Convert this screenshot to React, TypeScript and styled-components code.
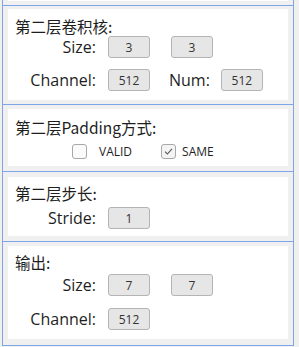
import styled, { createGlobalStyle } from 'styled-components';

const colors = {
  page: '#f0f0f0',
  line: '#7ea5e6',
  card: '#ffffff',
  text: '#1e1e1e',
  fieldBg: '#e6e6e6',
  fieldBorder: '#b4b4b4',
};

const GlobalStyle = createGlobalStyle`
  html, body {
    margin: 0;
    padding: 0;
    background: ${colors.page};
  }
  body {
    font-family: 'Open Sans', 'Noto Sans CJK SC', sans-serif;
    color: ${colors.text};
  }
`;

interface FieldRow {
  label: string;
  values: { label?: string; value: string }[];
}

interface Section {
  title: string;
  rows?: FieldRow[];
  options?: { label: string; checked: boolean }[];
  gapAbove: number;
  gapBelow: number;
  padTop: number;
  padBottom: number;
  rowGap: number;
  titleGap: number;
}

const sections: Section[] = [
  {
    title: '第二层卷积核:',
    gapAbove: 3,
    gapBelow: 4,
    padTop: 7,
    padBottom: 9,
    rowGap: 11,
    titleGap: 0,
    rows: [
      { label: 'Size:', values: [{ value: '3' }, { value: '3' }] },
      { label: 'Channel:', values: [{ value: '512' }, { label: 'Num:', value: '512' }] },
    ],
  },
  {
    title: '第二层Padding方式:',
    gapAbove: 4,
    gapBelow: 5,
    padTop: 8,
    padBottom: 5,
    rowGap: 0,
    titleGap: 4,
    options: [
      { label: 'VALID', checked: false },
      { label: 'SAME', checked: true },
    ],
  },
  {
    title: '第二层步长:',
    gapAbove: 5,
    gapBelow: 5,
    padTop: 6,
    padBottom: 7,
    rowGap: 0,
    titleGap: 4,
    rows: [{ label: 'Stride:', values: [{ value: '1' }] }],
  },
  {
    title: '输出:',
    gapAbove: 4,
    gapBelow: 6,
    padTop: 6,
    padBottom: 9,
    rowGap: 12,
    titleGap: 2,
    rows: [
      { label: 'Size:', values: [{ value: '7' }, { value: '7' }] },
      { label: 'Channel:', values: [{ value: '512' }] },
    ],
  },
];

export default function App() {
  return (
    <>
      <GlobalStyle />
      <Frame>
        <ScrolledTail>
          <TailCard />
        </ScrolledTail>
        {sections.map((section) => (
          <Panel key={section.title} $above={section.gapAbove} $below={section.gapBelow}>
            <Card $padTop={section.padTop} $padBottom={section.padBottom}>
              <Title>{section.title}</Title>
              {section.rows && (
                <Rows $gap={section.rowGap} $top={section.titleGap}>
                  {section.rows.map((row) => (
                    <Row key={row.label}>
                      <Label>{row.label}</Label>
                      <Field>{row.values[0].value}</Field>
                      {row.values[1] && (
                        <SecondGroup>
                          {row.values[1].label && <SubLabel>{row.values[1].label}</SubLabel>}
                          <Field>{row.values[1].value}</Field>
                        </SecondGroup>
                      )}
                    </Row>
                  ))}
                </Rows>
              )}
              {section.options && (
                <Options $top={section.titleGap}>
                  {section.options.map((opt) => (
                    <Option key={opt.label} $wide={!opt.checked}>
                      <Box $checked={opt.checked}>
                        {opt.checked && (
                          <svg width="11" height="11" viewBox="0 0 11 11">
                            <path d="M2 5.6 L4.4 8 L9 2.8" fill="none" stroke="#555" strokeWidth="1.1" />
                          </svg>
                        )}
                      </Box>
                      <OptionText $wide={!opt.checked}>{opt.label}</OptionText>
                    </Option>
                  ))}
                </Options>
              )}
            </Card>
          </Panel>
        ))}
      </Frame>
    </>
  );
}

const Frame = styled.div`
  margin-left: 2px;
  width: 292px;
  box-sizing: border-box;
  border-left: 1px solid ${colors.line};
  border-right: 1px solid ${colors.line};
  border-bottom: 1px solid ${colors.line};
`;

const ScrolledTail = styled.div`
  padding: 0 5px 4px;
`;

const TailCard = styled.div`
  height: 1px;
  background: ${colors.card};
`;

const Panel = styled.div<{ $above: number; $below: number }>`
  border-top: 1px solid ${colors.line};
  padding: ${(p) => p.$above}px 5px ${(p) => p.$below}px;
`;

const Card = styled.div<{ $padTop: number; $padBottom: number }>`
  background: ${colors.card};
  padding: ${(p) => p.$padTop}px 7px ${(p) => p.$padBottom}px;
`;

const Title = styled.div`
  font-family: 'Noto Sans CJK SC', 'Open Sans', sans-serif;
  font-size: 15.5px;
  line-height: 20px;
  height: 20px;
  white-space: nowrap;
`;

const Rows = styled.div<{ $gap: number; $top: number }>`
  display: flex;
  flex-direction: column;
  gap: ${(p) => p.$gap}px;
  margin-top: ${(p) => p.$top}px;
`;

const Row = styled.div`
  display: flex;
  align-items: center;
  height: 22px;
`;

const Label = styled.div`
  width: 81px;
  text-align: right;
  font-size: 16px;
  margin-right: 12px;
  white-space: nowrap;
`;

const SecondGroup = styled.div`
  display: flex;
  align-items: center;
  margin-left: 21px;
`;

const SubLabel = styled.div`
  font-size: 16px;
  margin-right: 11px;
  margin-left: -2px;
`;

const Field = styled.div`
  width: 42px;
  height: 22px;
  box-sizing: border-box;
  border: 1px solid ${colors.fieldBorder};
  border-radius: 3px;
  background: ${colors.fieldBg};
  display: flex;
  align-items: center;
  justify-content: center;
  font-size: 12px;
  color: #333;
`;

const Options = styled.div<{ $top: number }>`
  display: flex;
  align-items: center;
  height: 20px;
  margin-top: ${(p) => p.$top}px;
  padding-left: 57px;
`;

const Option = styled.label<{ $wide: boolean }>`
  display: flex;
  align-items: center;
  margin-right: ${(p) => (p.$wide ? 29 : 0)}px;
`;

const Box = styled.span<{ $checked: boolean }>`
  width: 15px;
  height: 15px;
  box-sizing: border-box;
  border: 1px solid #a8a8a8;
  border-radius: 3px;
  background: ${(p) => (p.$checked ? '#f4f4f4' : '#fbfbfb')};
  display: flex;
  align-items: center;
  justify-content: center;
`;

const OptionText = styled.span<{ $wide: boolean }>`
  font-size: 12px;
  margin-left: ${(p) => (p.$wide ? 12 : 6)}px;
`;
